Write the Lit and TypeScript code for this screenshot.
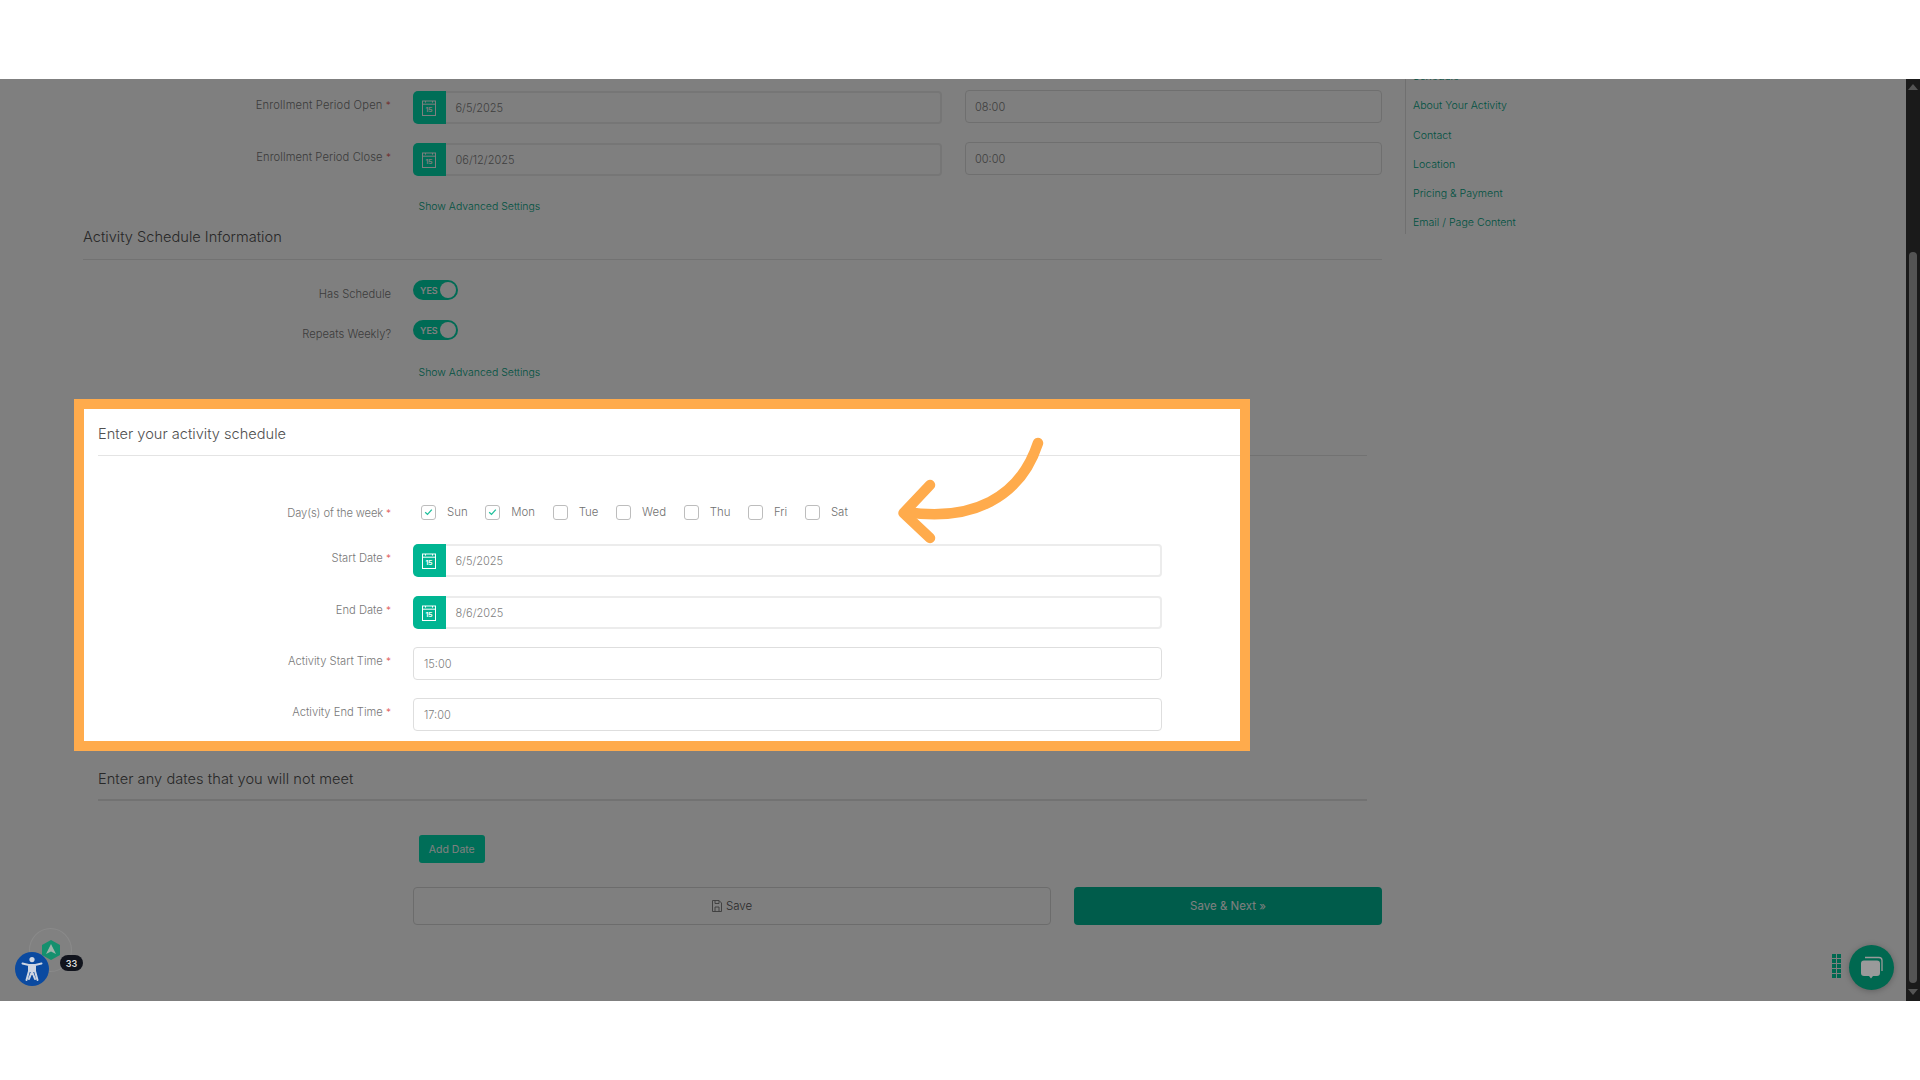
import { LitElement, html, css, svg } from "lit";
import { customElement } from "lit/decorators.js";

const DAYS = [
  ["Sun", true], ["Mon", true], ["Tue", false], ["Wed", false], ["Thu", false], ["Fri", false], ["Sat", false],
] as const;

const NAV = ["Schedule", "About Your Activity", "Contact", "Location", "Pricing & Payment", "Email / Page Content"];

const calIcon = html`<svg class="cal" viewBox="0 0 14 16" width="14" height="16" aria-hidden="true">
  <rect x=".5" y="1" width="13" height="14.5" fill="none" stroke="currentColor" stroke-width="1"></rect>
  <path d="M.5 4.2h13M3.5 1v1.6M10.5 1v1.6" fill="none" stroke="currentColor" stroke-width="1"></path>
  <text x="7" y="12.4" text-anchor="middle" font-size="6.6" font-weight="700" fill="currentColor" font-family="Inter, sans-serif">15</text>
</svg>`;

@customElement("app-root")
export class AppRoot extends LitElement {
  static styles = css`
    :host { display: block; width: 1920px; height: 1080px; background: #fff; font-family: Inter, "Liberation Sans", sans-serif; overflow: hidden; }
    .band { height: 79px; background: #fff; }
    .viewport { position: relative; height: 922px; overflow: hidden; display: flex; background: #fff; }
    .page { flex: 1; display: flex; align-items: flex-start; min-width: 0; }
    .main { width: 1382px; flex: none; padding: 12px 0 0 83px; box-sizing: border-box; }
    .row { display: grid; grid-template-columns: 308px 1fr; column-gap: 22px; align-items: start; }
    .label { font-size: 11.2px; line-height: 14px; padding-top: 7px; text-align: right; color: #787878; font-weight: 300; }
    .label.loose { letter-spacing: .16px; }
    .label.close { letter-spacing: .08px; }
    .label.tight { letter-spacing: -.12px; }
    .label i { color: #e0564f; font-style: normal; font-size: 10px; }
    .fields { display: flex; gap: 23px; }
    .date { width: 529px; flex: none; }
    .wide .date, .wide .input { width: 749px; }
    .field { display: flex; height: 33px; box-sizing: border-box; }
    .addon { width: 32.5px; flex: none; background: #00b592; color: #fff; border-radius: 5px 0 0 5px; display: flex; align-items: center; justify-content: center; }
    .dim .addon { background: #00dcae; }
    .value { flex: 1; border: 2px solid #ececec; border-left: 0; border-radius: 0 4px 4px 0; display: flex; align-items: center; padding-left: 10px; font-size: 11px; font-weight: 300; color: #808080; background: #fff; }
    .input { height: 33px; box-sizing: border-box; border: 1px solid #dedede; border-radius: 4px; display: flex; align-items: center; padding-left: 10px; font-size: 11px; font-weight: 300; color: #808080; background: #fff; }
    .time { width: 417px; flex: none; margin-top: -1px; padding-left: 9px; }
    .gap19 { margin-top: 19px; }
    .gap18 { margin-top: 18px; }
    .link { font-size: 10.5px; line-height: 14px; color: #00a584; margin-left: 335.500px; font-weight: 300; }
    .link.a { margin-top: 24px; }
    .link.b { margin-top: 26px; }
    .head { font-size: 14.6px; line-height: 20px; color: #505050; font-weight: 300; padding-bottom: 11px; border-bottom: 1px solid #e4e4e4; }
    .head.top { margin-top: 13px; padding-bottom: 12px; }
    .head.sub { margin: 44px 15px 0; }
    .head.dates { margin: 38px 15px 0; border-bottom-width: 2px; padding-bottom: 10px; letter-spacing: .05px; }
    .toggle { position: relative; width: 45px; height: 20px; border-radius: 10px; background: #00d6aa; display: flex; align-items: center; color: #fff; font-size: 9px; font-weight: 600; padding-left: 7px; box-sizing: border-box; }
    .toggle::after { content: ""; position: absolute; right: 2px; top: 2px; width: 16px; height: 16px; border-radius: 50%; background: #fff; }
    .sw { height: 20px; margin-top: 20px; }
    .days-row { margin-top: 46px; height: 20px; align-items: center; }
    .days-row .label { padding-top: 1px; }
    .days { display: flex; align-items: center; padding-left: 8px; font-size: 11.4px; font-weight: 300; color: #707070; }
    .day { display: flex; align-items: center; gap: 11px; margin-right: 17.700px; }
    .box { width: 15px; height: 15px; border: 1px solid #bdbdbd; border-radius: 3px; box-sizing: border-box; display: flex; align-items: center; justify-content: center; }
    .start { margin-top: 22px; }
    .add { margin-top: 34px; }
    .btn-add { margin-left: 5.500px; width: 66.500px; height: 28px; border-radius: 3px; background: #00dcb0; color: #fff; font-size: 10.5px; display: flex; align-items: center; justify-content: center; }
    .actions { margin-top: 24px; }
    .btns { display: flex; gap: 23px; }
    .save { width: 638px; height: 38px; box-sizing: border-box; border: 1px solid #d8d8d8; border-radius: 4px; color: #555; font-size: 11.5px; font-weight: 300; display: flex; align-items: center; justify-content: center; gap: 4px; }
    .next { width: 308px; height: 38px; border-radius: 4px; background: #00b896; color: #fff; font-size: 11.5px; display: flex; align-items: center; justify-content: center; }
    .aside { margin-left: 23px; height: 155px; border-left: 1px solid #e0e0e0; padding-left: 7px; }
    .aside ul { list-style: none; margin: -9px 0 0; padding: 0; display: flex; flex-direction: column; gap: 15.3px; }
    .aside li { font-size: 10.6px; line-height: 14px; color: #00a584; font-weight: 300; }
    .scrollbar { width: 14px; flex: none; background: #343434; display: flex; flex-direction: column; align-items: center; position: relative; }
    .up { margin-top: 5px; width: 0; height: 0; border-left: 5px solid transparent; border-right: 5px solid transparent; border-bottom: 6px solid #a8a8a8; }
    .thumb { margin-top: 162px; width: 8px; height: 731px; border-radius: 4px; background: #a8a8a8; }
    .down { margin-top: 6px; width: 0; height: 0; border-left: 5px solid transparent; border-right: 5px solid transparent; border-top: 6px solid #a8a8a8; }
    .spot { position: absolute; left: 73.5px; top: 320px; width: 1176px; height: 352px; box-sizing: border-box; border: 10px solid #ffab4c; box-shadow: 0 0 0 3000px rgba(0, 0, 0, .5); z-index: 2; pointer-events: none; }
    .arrow { position: absolute; left: 880px; top: 340px; z-index: 3; }
    .widgets { position: absolute; left: 0; top: 0; z-index: 4; }
    .access { position: absolute; left: 15px; top: 873px; width: 34px; height: 34px; border-radius: 50%; background: #0b4aa0; display: flex; align-items: center; justify-content: center; }
    .ring { position: absolute; left: 29px; top: 849px; width: 43px; height: 44px; box-sizing: border-box; border-radius: 50%; border: 1px solid #8a8a8a; background: #818181; }
    .hex { position: absolute; left: 42px; top: 861px; }
    .badge { position: absolute; left: 60px; top: 876px; width: 23px; height: 16px; border-radius: 8px; background: #11141d; color: #ddd; font-size: 9px; font-weight: 600; display: flex; align-items: center; justify-content: center; }
    .dots { position: absolute; left: 1832px; top: 875px; display: grid; grid-template-columns: 4px 4px; gap: 1px 1px; }
    .dots b { width: 4px; height: 4px; background: #006850; display: block; }
    .chat { position: absolute; left: 1849px; top: 866px; width: 45px; height: 45px; border-radius: 50%; background: #006850; box-shadow: 0 1px 6px rgba(0,0,0,.25); display: flex; align-items: center; justify-content: center; }
  `;

  private dateField(v: string) {
    return html`<div class="field date"><span class="addon">${calIcon}</span><span class="value">${v}</span></div>`;
  }

  render() {
    return html`
      <div class="band"></div>
      <div class="viewport">
        <div class="page">
          <div class="main">
            <div class="row dim">
              <div class="label loose">Enrollment Period Open <i>*</i></div>
              <div class="fields">${this.dateField("6/5/2025")}<div class="input time">08:00</div></div>
            </div>
            <div class="row gap19 dim">
              <div class="label close">Enrollment Period Close <i>*</i></div>
              <div class="fields">${this.dateField("06/12/2025")}<div class="input time">00:00</div></div>
            </div>
            <div class="link a">Show Advanced Settings</div>
            <div class="head top">Activity Schedule Information</div>
            <div class="row sw"><div class="label">Has Schedule</div><div class="toggle">YES</div></div>
            <div class="row sw"><div class="label">Repeats Weekly?</div><div class="toggle">YES</div></div>
            <div class="link b">Show Advanced Settings</div>

            <div class="head sub">Enter your activity schedule</div>
            <div class="row days-row">
              <div class="label tight">Day(s) of the week <i>*</i></div>
              <div class="days">
                ${DAYS.map(([d, on]) => html`<div class="day"><span class="box">${on ? html`<svg width="9" height="8" viewBox="0 0 9 8"><path d="M1.200 4.200 3.500 6.400 7.800 1.600" fill="none" stroke="#1fc09c" stroke-width="1.300"></path></svg>` : ""}</span>${d}</div>`)}
              </div>
            </div>
            <div class="row start wide"><div class="label">Start Date <i>*</i></div>${this.dateField("6/5/2025")}</div>
            <div class="row gap19 wide"><div class="label">End Date <i>*</i></div>${this.dateField("8/6/2025")}</div>
            <div class="row gap18 wide"><div class="label">Activity Start Time <i>*</i></div><div class="input">15:00</div></div>
            <div class="row gap18 wide"><div class="label">Activity End Time <i>*</i></div><div class="input">17:00</div></div>

            <div class="head dates">Enter any dates that you will not meet</div>
            <div class="row add"><div></div><div class="btn-add">Add Date</div></div>
            <div class="row actions"><div></div>
              <div class="btns">
                <div class="save"><svg width="10" height="12" viewBox="0 0 10 12"><path d="M.5.5h6.500l2.500 2.500v8.500h-9zM3 .5v3h4V.5M3 11.500V7h4v4.500" fill="none" stroke="#777" stroke-width=".9"></path></svg>Save</div>
                <div class="next">Save &amp; Next »</div>
              </div>
            </div>
          </div>
          <nav class="aside"><ul>${NAV.map((n) => html`<li>${n}</li>`)}</ul></nav>
        </div>
        <div class="scrollbar"><span class="up"></span><span class="thumb"></span><span class="down"></span></div>

        <div class="spot"></div>
        <svg class="arrow" width="170" height="130" viewBox="880 340 170 130" aria-hidden="true">
          <g transform="translate(0 -79)" fill="none" stroke="#ffab4c" stroke-width="10.5" stroke-linecap="round" stroke-linejoin="round">
            ${svg`<path d="M1038 443C1020 498 972 522 906 512"></path><path d="M930 485 903.5 513 930 538"></path>`}
          </g>
        </svg>

        <div class="widgets">
          <span class="ring"></span>
          <svg class="hex" width="18" height="20" viewBox="0 0 18 20"><path d="M9 0 18 5v10L9 20 0 15V5z" fill="#14906e"></path><path d="M9 4 14 14 9 11.6 4 14z" fill="#9fb4ac"></path></svg>
          <span class="access"><svg width="22" height="26" viewBox="0 0 22 26"><circle cx="11" cy="3.6" r="2.6" fill="#cfd6e2"></circle><path d="M1.5 7.5 8 9v6l-2.5 9M20.500 7.500 14 9v6l2.500 9M8 9h6M11 15.500 8 23M11 15.500 14 23" fill="none" stroke="#cfd6e2" stroke-width="2" stroke-linecap="round"></path><path d="M8 9h6v7H8z" fill="#cfd6e2"></path></svg></span>
          <span class="badge">33</span>
          <div class="dots">${Array.from({ length: 10 }, () => html`<b></b>`)}</div>
          <span class="chat"><svg width="24" height="24" viewBox="0 0 24 24"><path d="M5 1.500h14a3 3 0 0 1 3 3V15" fill="none" stroke="#9a9a9a" stroke-width="1.3"></path><path d="M4 4.500h13a3 3 0 0 1 3 3V17a3 3 0 0 1-3 3h-4l-2 2.500L9 20H4a3 3 0 0 1-3-3V7.500a3 3 0 0 1 3-3z" fill="#9a9a9a"></path></svg></span>
        </div>
      </div>
      <div class="band"></div>
    `;
  }
}
